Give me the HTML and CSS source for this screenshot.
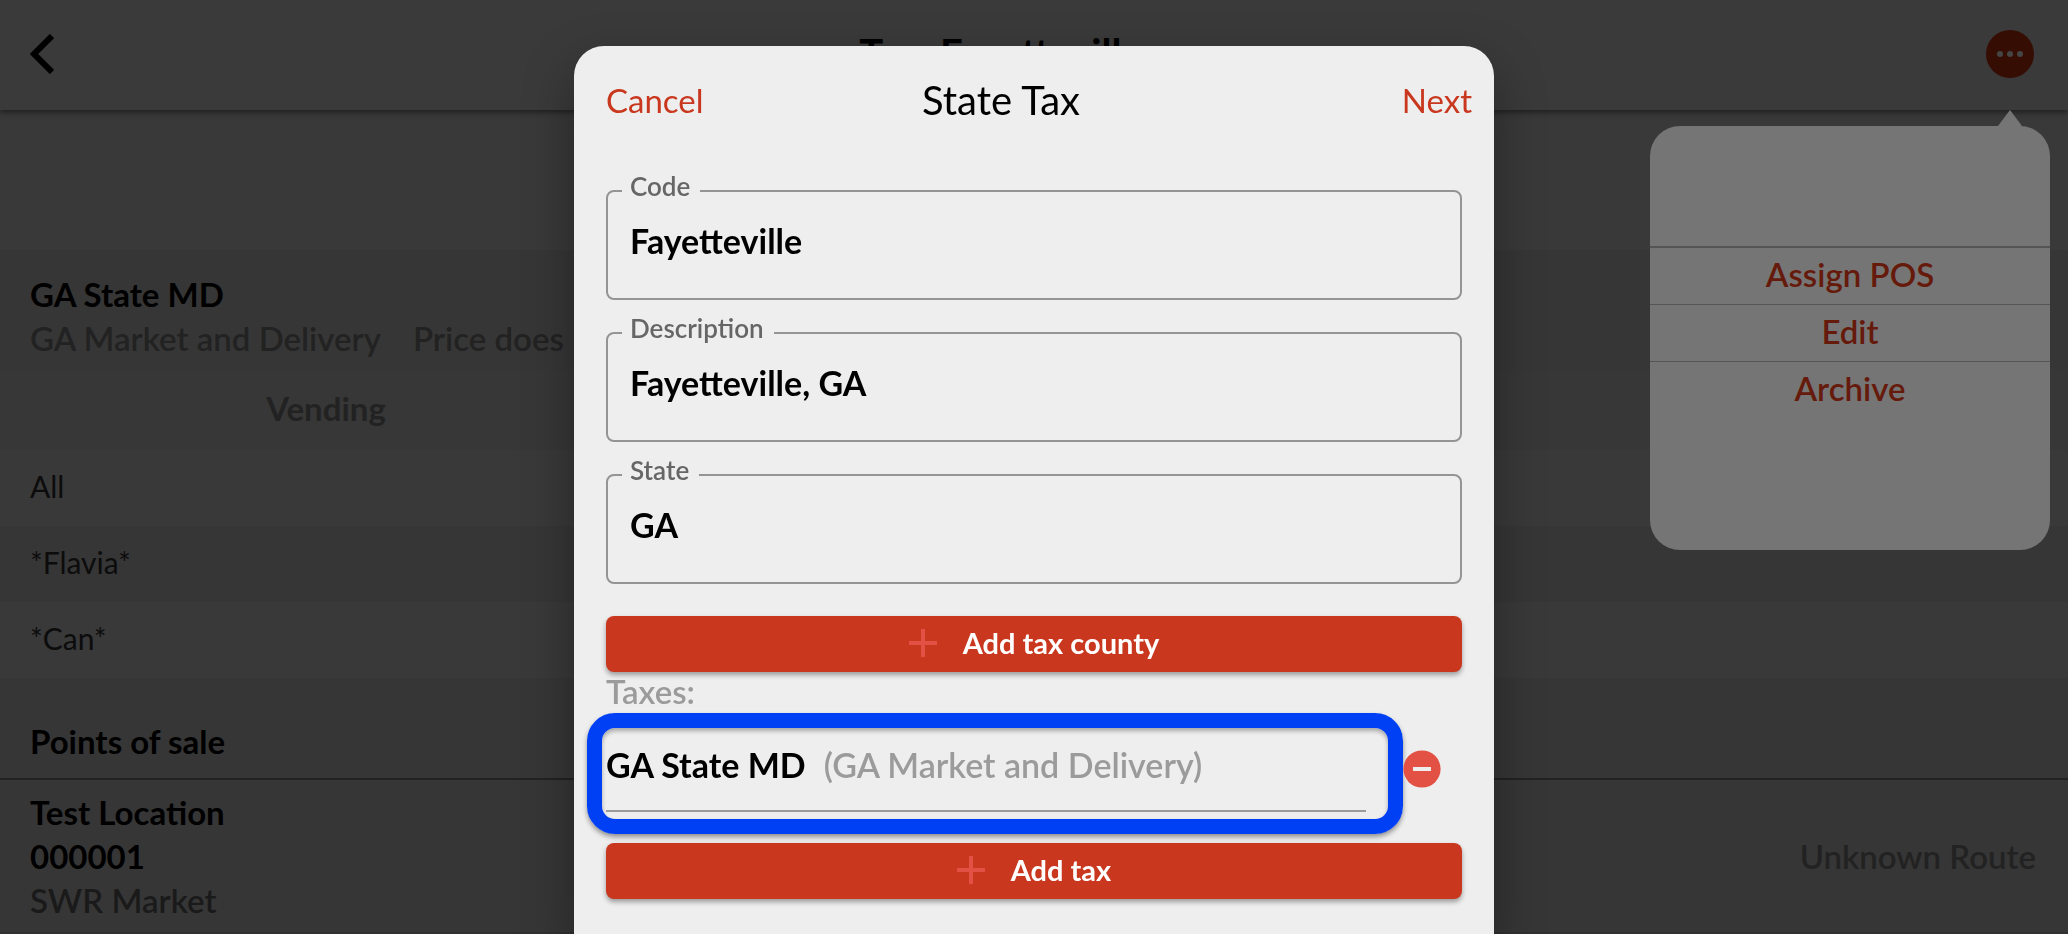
FILE: index.html
```html
<!DOCTYPE html>
<html lang="en">
<head>
    <meta charset="UTF-8">
    <meta name="viewport" content="width=device-width, initial-scale=1.0">
    <title>State Tax</title>
    <link rel="stylesheet" href="styles.css">
</head>
<body>
    <!-- Tax details page, dimmed behind the dialog -->
    <div class="page">
        <header class="topbar">
            <button type="button" class="back" aria-label="Back">
                <svg width="24" height="40" viewBox="0 0 24 40">
                    <path d="M22 2 L4 20 L22 38" fill="none" stroke="#000" stroke-width="6"/>
                </svg>
            </button>
            <h1>Tax: Fayetteville</h1>
            <div class="more-wrap">
                <button type="button" class="more" aria-label="More">
                    <svg width="48" height="48" viewBox="0 0 48 48">
                        <circle cx="24" cy="24" r="24" fill="#350d03"/>
                        <g fill="#454545">
                            <circle cx="14" cy="24" r="3"/>
                            <circle cx="24" cy="24" r="3"/>
                            <circle cx="34" cy="24" r="3"/>
                        </g>
                    </svg>
                </button>
                <div class="popover">
                    <button type="button">Assign POS</button>
                    <button type="button">Edit</button>
                    <button type="button">Archive</button>
                </div>
            </div>
        </header>

        <div class="spacer"></div>

        <section class="summary">
            <h2>GA State MD</h2>
            <p><span>GA Market and Delivery</span><span>Price does</span></p>
        </section>

        <div class="columns">
            <span class="column">Vending</span>
        </div>

        <ul class="products">
            <li>All</li>
            <li>*Flavia*</li>
            <li>*Can*</li>
        </ul>

        <h2 class="pos-title">Points of sale</h2>
        <div class="pos">
            <div>
                <h3>Test Location</h3>
                <h3>000001</h3>
                <p class="market">SWR Market</p>
            </div>
            <p class="route">Unknown Route</p>
        </div>
    </div>

    <!-- Dialog -->
    <div class="overlay">
        <form class="modal" role="dialog" aria-labelledby="modalTitle">
            <div class="modal-header">
                <button type="button" class="link">Cancel</button>
                <h2 id="modalTitle">State Tax</h2>
                <button type="submit" class="link next">Next</button>
            </div>

            <fieldset class="field">
                <legend><label for="code">Code</label></legend>
                <input type="text" id="code" name="code" value="Fayetteville">
            </fieldset>
            <fieldset class="field">
                <legend><label for="description">Description</label></legend>
                <input type="text" id="description" name="description" value="Fayetteville, GA">
            </fieldset>
            <fieldset class="field">
                <legend><label for="state">State</label></legend>
                <input type="text" id="state" name="state" value="GA">
            </fieldset>

            <button type="button" class="btn btn-county">
                <svg width="28" height="28" viewBox="0 0 28 28">
                    <path d="M14 0 V28 M0 14 H28" stroke="#e35144" stroke-width="4"/>
                </svg>
                Add tax county
            </button>

            <p class="taxes-label">Taxes:</p>
            <div class="tax-row">
                <div class="tax-highlight">
                    <div class="tax">
                        <strong>GA State MD</strong>
                        <span>(GA Market and Delivery)</span>
                    </div>
                </div>
                <button type="button" class="remove" aria-label="Remove tax">
                    <svg width="38" height="38" viewBox="0 0 38 38">
                        <circle cx="19" cy="19" r="18.6" fill="#e35144"/>
                        <path d="M10 19 H28" stroke="#eee" stroke-width="4"/>
                    </svg>
                </button>
            </div>

            <button type="button" class="btn">
                <svg width="28" height="28" viewBox="0 0 28 28">
                    <path d="M14 0 V28 M0 14 H28" stroke="#e35144" stroke-width="4"/>
                </svg>
                Add tax
            </button>
        </form>
    </div>
</body>
</html>
```

FILE: styles.css
```css
:root {
    --red: #c9381e;
    --modal-bg: #eeeeee;
    --page-bg: #393939;
    --page-alt: #363636;
    --page-muted: #222222;
}

* {
    margin: 0;
    padding: 0;
    box-sizing: border-box;
}

body {
    font-family: Lato, "Open Sans", sans-serif;
    font-size: 33px;
    line-height: 44px;
    background: var(--page-alt);
    color: #000;
}

button,
input {
    font: inherit;
    border: none;
    background: none;
}

button {
    display: block;
    cursor: pointer;
}

svg {
    display: block;
}

/* Page */
.page {
    height: 100vh;
    overflow: hidden;
}

.topbar {
    display: grid;
    grid-template-columns: 1fr auto 1fr;
    align-items: center;
    height: 110px;
    padding: 0 34px 2px 30px;
    background: #3a3a3a;
    box-shadow: 0 2px 6px rgba(0, 0, 0, 0.5);
    position: relative;
}

.back {
    justify-self: start;
}

.topbar h1 {
    padding-bottom: 2px;
    font-size: 40px;
    font-weight: 700;
    margin-right: 62px;
}

.more-wrap {
    justify-self: end;
    position: relative;
}

.popover {
    position: absolute;
    top: 96px;
    right: -16px;
    width: 400px;
    padding: 120px 0 132px;
    border-radius: 30px;
    background: #757575;
}

.popover::before {
    content: '';
    position: absolute;
    top: -16px;
    right: 28px;
    border: 12px solid transparent;
    border-top: none;
    border-bottom: 16px solid #757575;
}

.popover button {
    width: 100%;
    height: 57px;
    padding-bottom: 4px;
    border-top: 1px solid #555;
    color: #651a0b;
    font-weight: 600;
}

.popover button:first-child {
    height: 58px;
    border-top-width: 2px;
}

.spacer {
    height: 140px;
    background: var(--page-bg);
}

.page h2,
.page h3 {
    font-size: 33px;
    font-weight: 700;
}

.summary {
    height: 120px;
    padding: 22px 30px 10px;
}

.summary p {
    display: flex;
    gap: 32px;
    color: var(--page-muted);
    font-weight: 600;
}

.columns {
    height: 80px;
    padding: 16px 0;
    background: #373737;
    color: var(--page-muted);
    font-weight: 700;
}

.column {
    display: block;
    width: 652px;
    text-align: center;
}

.products {
    list-style: none;
    font-size: 30px;
}

.products li {
    padding: 14px 30px 18px;
    background: var(--page-bg);
    color: #0c0c0c;
}

.products li:nth-child(even) {
    background: var(--page-alt);
}

.page .pos-title {
    padding: 41px 30px 15px;
    border-bottom: 2px solid var(--page-muted);
}

.pos {
    display: flex;
    justify-content: space-between;
    align-items: center;
    padding: 10px 32px 10px 30px;
    border-bottom: 2px solid #303030;
    font-weight: 600;
}

.market {
    color: #1a1a1a;
}

.route {
    color: var(--page-muted);
}

/* Dialog */
.overlay {
    position: fixed;
    inset: 0;
    display: flex;
    justify-content: center;
    padding-top: 46px;
    overflow: hidden;
}

.modal {
    width: 100%;
    max-width: 920px;
    padding: 30px 32px 0;
    border-radius: 30px 30px 0 0;
    background: var(--modal-bg);
    box-shadow: 0 20px 50px rgba(0, 0, 0, 0.35);
}

.modal-header {
    display: grid;
    grid-template-columns: 1fr auto 1fr;
    align-items: center;
    height: 48px;
    margin: 0 -10px 46px 0;
}

.modal-header h2 {
    font-size: 40px;
    font-weight: 400;
    margin-right: 76px;
}

.link {
    justify-self: start;
    color: var(--red);
}

.next {
    justify-self: end;
}

.field {
    height: 130px;
    margin-bottom: 12px;
    padding: 0 14px;
    border: 2px solid #949494;
    border-radius: 8px;
}

.field legend {
    height: 42px;
    padding: 0 10px 10px 8px;
    color: #666;
    font-size: 26px;
    font-weight: 600;
    line-height: 32px;
}

.field input {
    display: block;
    width: 100%;
    height: 56px;
    padding: 0 8px;
    font-size: 34px;
    font-weight: 700;
    outline: none;
}

.btn {
    display: flex;
    justify-content: center;
    align-items: center;
    gap: 26px;
    width: 100%;
    height: 56px;
    padding-bottom: 2px;
    border-radius: 8px;
    background: var(--red);
    box-shadow: 0 3px 5px rgba(0, 0, 0, 0.35);
    color: #fff;
    font-size: 29px;
    font-weight: 700;
}

.btn-county {
    margin-top: 32px;
}

.taxes-label {
    color: #9b9b9b;
    font-weight: 600;
    line-height: 39px;
}

.tax-row {
    display: flex;
    align-items: center;
    margin: 2px 21px 9px -19px;
}

.tax-highlight {
    flex: 1;
    padding: 0 22px 7px 4px;
    border: 15px solid #0040f5;
    border-radius: 28px;
    box-shadow: 0 3px 5px rgba(0, 0, 0, 0.4), inset 0 3px 4px rgba(0, 0, 0, 0.3);
}

.tax {
    display: flex;
    align-items: center;
    gap: 18px;
    height: 84px;
    padding-bottom: 8px;
    border-bottom: 2px solid #9b9b9b;
    font-size: 34px;
    white-space: nowrap;
}

.tax strong {
    font-weight: 700;
}

.tax span {
    color: #9b9b9b;
    font-weight: 600;
}

.remove {
    padding-bottom: 10px;
}
```
